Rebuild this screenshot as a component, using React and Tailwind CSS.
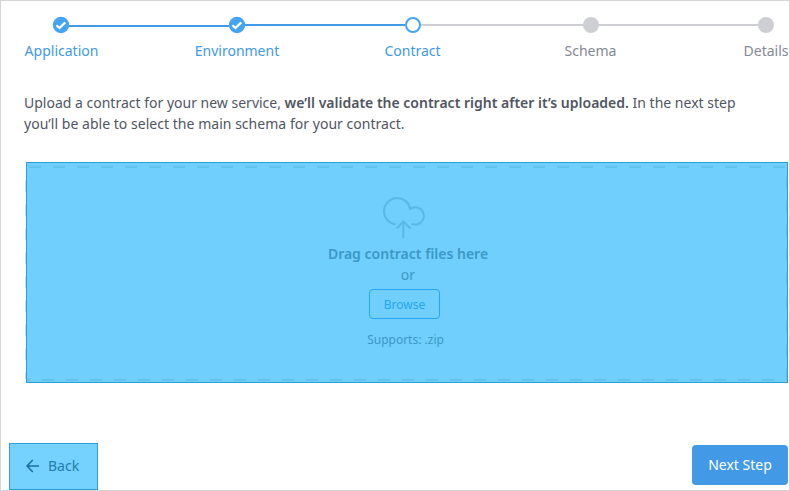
import React from "react";

const font = "font-['Noto_Sans','Open_Sans',sans-serif]";

function Done() {
  return (
    <svg className="size-4 shrink-0 overflow-visible" viewBox="0 0 16 16" fill="none">
      <circle cx="8" cy="8" r="8.2" fill="#45a5f2" />
      <path d="M3.4 8.2 L6.5 11 L12.3 5.4" stroke="#fff" strokeWidth="2.2" />
    </svg>
  );
}

function Stepper() {
  return (
    <div className="h-[65px] shrink-0 pt-4">
      <div className="flex items-center pl-[52px]">
        <Done />
        <div className="mt-0.5 h-0.5 w-40 shrink-0 bg-[#4299e5]" />
        <Done />
        <div className="h-0.5 w-40 shrink-0 bg-[#4299e5]" />
        <div className="size-4 shrink-0 rounded-full border-2 border-[#45a5f2] bg-white" />
        <div className="h-0.5 w-[162px] shrink-0 bg-[#cecfd4]" />
        <div className="size-4 shrink-0 rounded-full bg-[#cecfd4]" />
        <div className="h-0.5 w-[159px] shrink-0 bg-[#cecfd4]" />
        <div className="size-4 shrink-0 rounded-full bg-[#cecfd4]" />
      </div>
      <div className="mt-2 flex text-center text-sm leading-5 text-[#4299e5]">
        <span className="w-[121px] shrink-0">Application</span>
        <span className="w-[230px] shrink-0">Environment</span>
        <span className="w-[121px] shrink-0">Contract</span>
        <span className="w-[235px] shrink-0 text-[#858894]">Schema</span>
        <span className="w-[116px] shrink-0 text-[#858894]">Details</span>
      </div>
    </div>
  );
}

export default function App() {
  return (
    <div className={`flex h-[491px] w-[790px] flex-col overflow-hidden border border-[#d5d5d5] bg-white ${font}`}>
      <Stepper />
      <p className="ml-[23px] mt-[26px] w-[740px] shrink-0 text-sm leading-[21px] text-[#505562]">
        Upload a contract for your new service, <b className="font-semibold">we’ll validate the contract right after it’s uploaded.</b> In the next step
        <br />
        <span className="tracking-[0.03px]">you’ll be able to select the main schema for your contract.</span>
      </p>
      <div className="relative ml-[25px] mt-7 flex h-[221px] w-[762px] shrink-0 flex-col items-center border border-[#2a9fdc] bg-[#70cffc] text-[#3c98c8]">
        <svg className="absolute inset-0 h-full w-full overflow-visible" fill="none" stroke="#64c1ee" strokeWidth="2">
          <path d="M2 4H760" strokeDasharray="12 12" />
          <path d="M15 217H750M0 217H3" strokeDasharray="12 12" />
          <path d="M759.5 14V217" strokeWidth="1" strokeDasharray="12 12" />
          <path d="M-1.5 17V216" stroke="#d5dce1" strokeWidth="1" strokeDasharray="12 12" />
        </svg>
        <svg className="mt-[33px] ml-[-7px] h-[43px] w-[44px] shrink-0" viewBox="0 0 44 43" fill="none" stroke="#5ab8e6" strokeWidth="2" strokeLinecap="round">
          <path d="M13 28.2A13.2 13.2 0 1 1 28.2 13A8.6 8.6 0 1 1 30.3 28M21.3 41.5V25.5M15 32L21.3 25.5L28 32" />
        </svg>
        <div className="mt-[4px] ml-0.5 text-sm font-semibold leading-[21px]">Drag contract files here</div>
        <div className="ml-0.5 text-sm leading-[21px]">or</div>
        <button className="mt-[4px] ml-[-5px] h-[30px] w-[71px] rounded border border-[#25a5f2] pt-0.5 text-xs text-[#25a5f2]">Browse</button>
        <div className="mt-3 ml-[-3px] text-xs leading-[18px]">Supports: .zip</div>
      </div>
      <div className="mt-[60px] flex shrink-0 items-start pl-2">
        <button className="flex h-[47px] w-[89px] items-center border border-[#2a9fdc] bg-[#75d1fd] pb-0.5 pl-4 text-sm text-[#207eae]">
          <svg className="mr-2 h-[14px] w-[14px]" viewBox="0 0 14 14" fill="none" stroke="#176f9d" strokeWidth="1.5">
            <path d="M13 7H1M6.8 1L1 7L6.8 13" />
          </svg>
          Back
        </button>
        <button className="ml-[594px] mt-0.5 h-10 w-24 rounded bg-[#4299e5] text-sm text-white">Next Step</button>
      </div>
    </div>
  );
}
